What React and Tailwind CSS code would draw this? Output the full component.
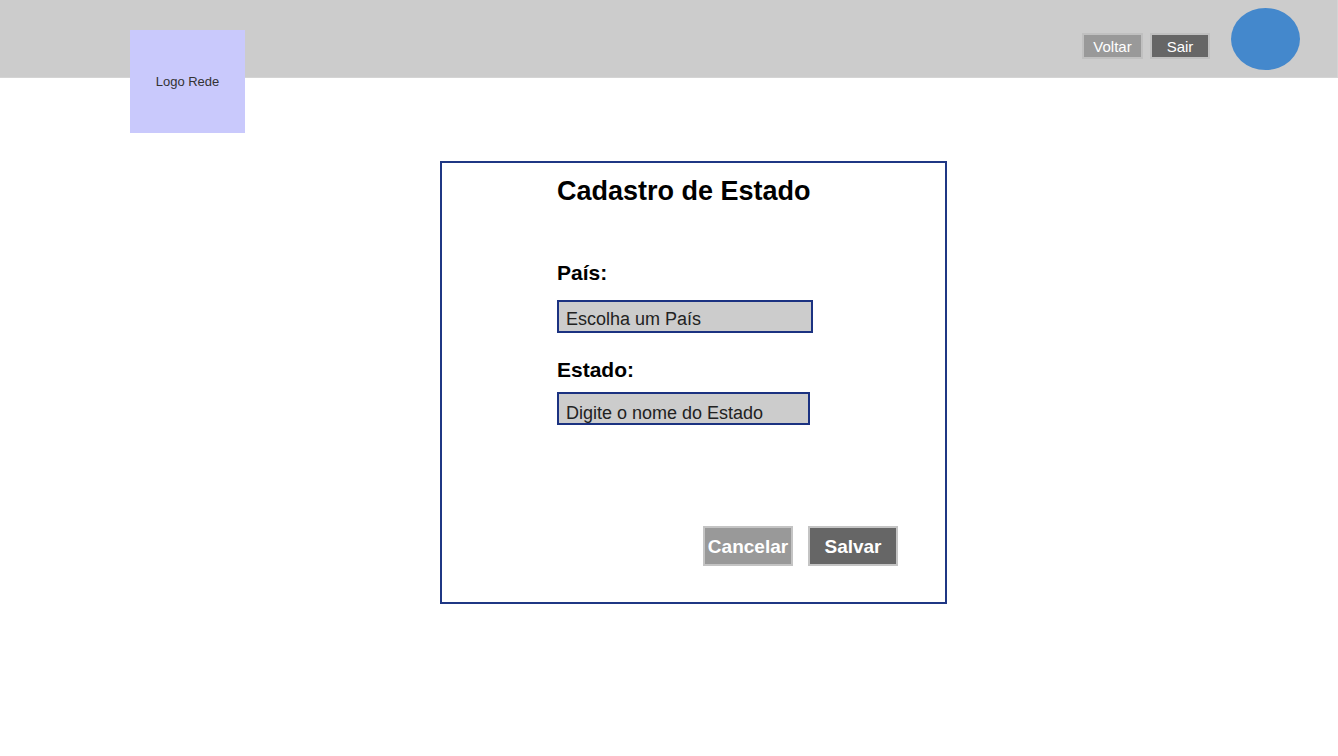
import React from "react";

function Header() {
  return (
    <header className="flex h-[78px] items-start justify-between border-r border-b border-[#d4d4d4] bg-[#cccccc] pt-2 pr-[37px] pl-[130px]">
      <div className="mt-[22px] flex h-[103px] w-[115px] shrink-0 items-center justify-center bg-[#c9c9fc] text-[13px] text-[#333333]">
        Logo Rede
      </div>
      <div className="flex items-start">
        <nav className="mt-[25px] flex gap-[7px]">
          <button
            type="button"
            className="h-[26px] w-[61px] border-2 border-[#c0c0c0] bg-[#999999] pt-0.5 text-[15px] leading-5 text-white"
          >
            Voltar
          </button>
          <button
            type="button"
            className="h-[26px] w-[60px] border-2 border-[#c0c0c0] bg-[#666666] pt-0.5 text-[15px] leading-5 text-white"
          >
            Sair
          </button>
        </nav>
        <div className="ml-[21px] h-[62px] w-[69px] rounded-[50%] bg-[#4488cc]" />
      </div>
    </header>
  );
}

export default function App() {
  return (
    <div className="min-h-screen bg-white font-['Liberation_Sans',Arial,sans-serif] text-black">
      <Header />
      <main className="flex justify-center pt-[83px] pl-[49px]">
        <form
          className="flex w-full max-w-[507px] flex-col border-2 border-[#1f3784] pt-3 pr-[47px] pb-[36px] pl-[115px]"
          onSubmit={(e) => e.preventDefault()}
        >
          <h1 className="text-[27px] leading-8 font-bold">Cadastro de Estado</h1>

          <label htmlFor="pais" className="mt-[54px] text-[21px] leading-6 font-bold">
            País:
          </label>
          <select
            id="pais"
            defaultValue=""
            className="mt-[15px] h-[33px] w-[256px] appearance-none rounded-none border-2 border-[#1b3281] bg-[#cccccc] pt-1 pl-[7px] text-[18px] text-[#222222] outline-none"
          >
            <option value="">Escolha um País</option>
          </select>

          <label htmlFor="estado" className="mt-[25px] text-[21px] leading-6 font-bold">
            Estado:
          </label>
          <input
            id="estado"
            type="text"
            placeholder="Digite o nome do Estado"
            className="mt-[10px] h-[33px] w-[253px] border-2 border-[#1b3281] bg-[#cccccc] pt-[9px] pl-[7px] text-[18px] leading-5 text-[#222222] outline-none placeholder:text-[#222222]"
          />

          <div className="mt-[101px] flex justify-end gap-[15px]">
            <button
              type="button"
              className="h-10 w-[90px] border-2 border-[#c4c4c4] bg-[#999999] pt-0.5 text-[19px] font-bold text-white"
            >
              Cancelar
            </button>
            <button
              type="submit"
              className="h-10 w-[90px] border-2 border-[#c4c4c4] bg-[#666666] pt-0.5 text-[19px] font-bold text-white"
            >
              Salvar
            </button>
          </div>
        </form>
      </main>
    </div>
  );
}
